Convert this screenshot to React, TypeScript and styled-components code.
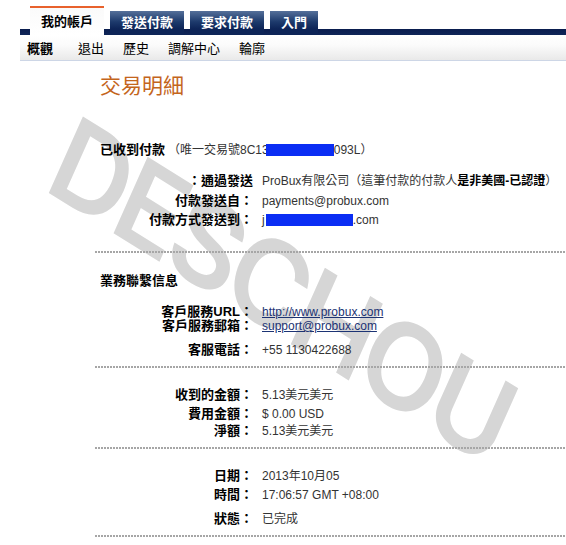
import { createGlobalStyle, styled } from "styled-components";

const GlobalStyle = createGlobalStyle`
  body {
    margin: 0;
    background: #fff;
    font-family: "Liberation Sans", Arial, "Noto Sans CJK TC", sans-serif;
    font-size: 12px;
    color: #333;
  }
`;

const tabs = ["我的帳戶", "發送付款", "要求付款", "入門"];
const subLinks = ["概觀", "退出", "歷史", "調解中心", "輪廓"];

type Row = { label: string; value: React.ReactNode; mt: number };

const App = () => {
  const renderRow = (r: Row, i: number) => (
    <S.Row key={i} $mt={r.mt}>
      <S.Label>{r.label}</S.Label>
      <S.Value>{r.value}</S.Value>
    </S.Row>
  );

  return (
    <S.Page>
      <GlobalStyle />
      <S.TabBar>
        {tabs.map((t, i) => (
          <S.Tab key={t} $active={i === 0}>
            {t}
          </S.Tab>
        ))}
      </S.TabBar>
      <S.SubNav>
        {subLinks.map((l, i) => (
          <S.SubLink key={l} $active={i === 0}>
            {l}
          </S.SubLink>
        ))}
      </S.SubNav>

      <S.Watermark>DESCHOU</S.Watermark>

      <S.Content>
        <S.Title>交易明細</S.Title>

        <S.Heading $mt={45}>
          已收到付款
          <S.HeadNote>
            （唯一交易號8C13
            <S.Redact $w={68} $ml={-3} />
            093L）
          </S.HeadNote>
        </S.Heading>
        {[
          {
            label: "：通過發送",
            value: (
              <>
                ProBux有限公司（這筆付款的付款人<b>是非美國-已認證</b>）
              </>
            ),
            mt: 15,
          },
          { label: "付款發送自：", value: "payments@probux.com", mt: 4 },
          {
            label: "付款方式發送到：",
            value: (
              <>
                j<S.Redact $w={87} $ml={1} />
                .com
              </>
            ),
            mt: 3,
          },
        ].map(renderRow)}
        <S.Divider $mt={23} />

        <S.Heading $mt={20}>業務聯繫信息</S.Heading>
        {[
          {
            label: "客戶服務URL：",
            value: <S.Link href="#">http://www.probux.com</S.Link>,
            mt: 15,
          },
          {
            label: "客戶服務郵箱：",
            value: <S.Link href="#">support@probux.com</S.Link>,
            mt: -2,
          },
          { label: "客服電話：", value: "+55 1130422688", mt: 8 },
        ].map(renderRow)}
        <S.Divider $mt={8} />

        {[
          { label: "收到的金額：", value: "5.13美元美元", mt: 19 },
          { label: "費用金額：", value: "$ 0.00 USD", mt: 3 },
          { label: "淨額：", value: "5.13美元美元", mt: 1 },
        ].map(renderRow)}
        <S.Divider $mt={8} />

        {[
          { label: "日期：", value: "2013年10月05", mt: 19 },
          { label: "時間：", value: "17:06:57 GMT +08:00", mt: 3 },
          { label: "狀態：", value: "已完成", mt: 8 },
        ].map(renderRow)}
        <S.Divider $mt={8} />
      </S.Content>
    </S.Page>
  );
};

const S = {
  Page: styled.div`
    position: relative;
    width: 566px;
    min-height: 545px;
    overflow: hidden;
  `,
  TabBar: styled.div`
    display: flex;
    align-items: flex-end;
    gap: 6px;
    height: 35px;
    margin-left: 20px;
    padding-left: 10px;
    background: linear-gradient(
      to bottom,
      transparent 29px,
      #0a1d4e 29px,
      #0f2558 35px
    );
  `,
  Tab: styled.div<{ $active: boolean }>`
    box-sizing: border-box;
    height: ${({ $active }) => ($active ? "29px" : "24px")};
    padding: ${({ $active }) => ($active ? "5px 11px 0" : "3px 11px 0")};
    font-size: 13px;
    font-weight: bold;
    line-height: 16px;
    font-family: "Noto Sans CJK TC", sans-serif;
    color: ${({ $active }) => ($active ? "#000" : "#fff")};
    border-top: ${({ $active }) => ($active ? "2px solid #e8612c" : "0")};
    background: ${({ $active }) =>
      $active
        ? "linear-gradient(to bottom, #fafafa, #fff)"
        : "linear-gradient(to bottom, #55709a 0%, #1d3a6c 45%, #0d2457 75%)"};
  `,
  SubNav: styled.div`
    display: flex;
    align-items: center;
    gap: 19px;
    height: 25px;
    margin-left: 20px;
    padding-left: 7px;
    font-family: "Noto Sans CJK TC", sans-serif;
    font-size: 13px;
    background: linear-gradient(to bottom, #fff 0%, #fbfbfb 40%, #e9e9e9 100%);
    border-bottom: 1px solid #cdd6e6;
  `,
  SubLink: styled.span<{ $active: boolean }>`
    color: #000;
    font-weight: ${({ $active }) => ($active ? "bold" : "normal")};
    margin-right: ${({ $active }) => ($active ? "6px" : "0")};
  `,
  Watermark: styled.div`
    position: absolute;
    left: 82px;
    top: 98px;
    transform-origin: 0 0;
    transform: rotate(32deg) skewX(8deg);
    font-family: Inter, sans-serif;
    font-weight: 600;
    font-size: 114px;
    letter-spacing: -6px;
    line-height: 1;
    color: #d6d6d6;
    white-space: nowrap;
    z-index: 0;
  `,
  Content: styled.div`
    position: relative;
    z-index: 1;
    margin-left: 95px;
  `,
  Title: styled.div`
    margin-top: 10px;
    padding-left: 5px;
    height: 26px;
    line-height: 26px;
    font-size: 21px;
    color: #c4651c;
    font-family: "Noto Sans CJK TC", sans-serif;
  `,
  Heading: styled.div<{ $mt: number }>`
    margin-top: ${({ $mt }) => $mt}px;
    padding-left: 5px;
    line-height: 16px;
    font-size: 13px;
    font-weight: bold;
    color: #000;
  `,
  HeadNote: styled.span`
    font-weight: normal;
    font-size: 12px;
    color: #333;
    margin-left: 3px;
  `,
  Row: styled.div<{ $mt: number }>`
    display: grid;
    grid-template-columns: 158px 1fr;
    column-gap: 9px;
    margin-top: ${({ $mt }) => $mt}px;
    line-height: 16px;
  `,
  Label: styled.div`
    text-align: right;
    font-size: 13px;
    font-weight: bold;
    color: #000;
    white-space: nowrap;
  `,
  Value: styled.div`
    font-size: 12px;
    color: #333;
    white-space: nowrap;
    b {
      color: #000;
    }
  `,
  Link: styled.a`
    color: #1c3374;
    text-decoration: underline;
  `,
  Redact: styled.span<{ $w: number; $ml: number }>`
    display: inline-block;
    width: ${({ $w }) => $w}px;
    height: 12px;
    margin-left: ${({ $ml }) => $ml}px;
    vertical-align: -2px;
    background: #0b2df4;
  `,
  Divider: styled.div<{ $mt: number }>`
    margin-top: ${({ $mt }) => $mt}px;
    height: 2px;
    background: repeating-linear-gradient(
      to right,
      #a6a6a6 0 2px,
      transparent 2px 3px
    );
  `,
};

export default App;
